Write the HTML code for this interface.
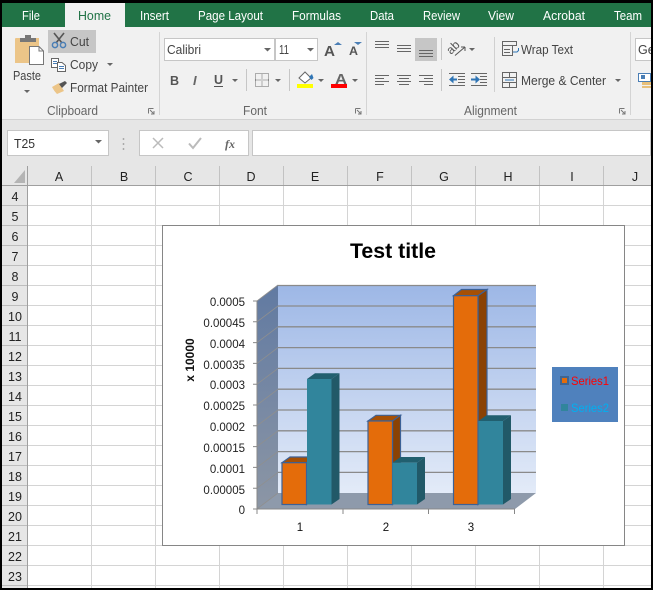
<!DOCTYPE html>
<html><head><meta charset="utf-8"><style>
html,body{margin:0;padding:0;background:#000;overflow:hidden}
svg{display:block}
path{shape-rendering:geometricPrecision}
text{font-family:"Liberation Sans",sans-serif}
.r{font-size:12.5px;fill:#444}
.t{font-size:12.5px;fill:#fff}
.l{font-size:12.5px;fill:#666}
.h{font-size:12.5px;fill:#222;text-anchor:middle}
.y{font-size:11.5px;fill:#222;text-anchor:end}
</style></head><body>
<svg xmlns="http://www.w3.org/2000/svg" width="653" height="590" viewBox="0 0 653 590" shape-rendering="crispEdges">
<defs>
<linearGradient id="wall" x1="0" y1="0" x2="0" y2="1"><stop offset="0" stop-color="#9db7e6"/><stop offset="1" stop-color="#e3ebf8"/></linearGradient>
<linearGradient id="lw" x1="0" y1="0" x2="0" y2="1"><stop offset="0" stop-color="#617aa2"/><stop offset="1" stop-color="#8c96a5"/></linearGradient>
</defs>
<rect width="653" height="590" fill="#000"/>
<!-- Window -->
<rect x="2" y="3" width="649" height="585" fill="#fff"/>
<!-- Tabs -->
<rect x="2" y="3" width="649" height="24" fill="#217346"/>
<rect x="65" y="3" width="60" height="24" fill="#f1f1f1"/>
<text class="t" x="22" y="20" textLength="18" lengthAdjust="spacingAndGlyphs">File</text>
<text x="78" y="20" font-size="12.5" fill="#217346" textLength="33" lengthAdjust="spacingAndGlyphs">Home</text>
<text class="t" x="140" y="20" textLength="29" lengthAdjust="spacingAndGlyphs">Insert</text>
<text class="t" x="198" y="20" textLength="65" lengthAdjust="spacingAndGlyphs">Page Layout</text>
<text class="t" x="292" y="20" textLength="49" lengthAdjust="spacingAndGlyphs">Formulas</text>
<text class="t" x="370" y="20" textLength="24" lengthAdjust="spacingAndGlyphs">Data</text>
<text class="t" x="423" y="20" textLength="37" lengthAdjust="spacingAndGlyphs">Review</text>
<text class="t" x="488" y="20" textLength="26" lengthAdjust="spacingAndGlyphs">View</text>
<text class="t" x="543" y="20" textLength="42" lengthAdjust="spacingAndGlyphs">Acrobat</text>
<text class="t" x="614" y="20" textLength="28" lengthAdjust="spacingAndGlyphs">Team</text>
<!-- Ribbon -->
<rect x="2" y="27" width="649" height="92" fill="#f1f1f1"/>
<rect x="2" y="119" width="649" height="1" fill="#d2d2d2"/>
<rect x="159" y="32" width="1" height="83" fill="#d4d4d4"/>
<rect x="366" y="32" width="1" height="83" fill="#d4d4d4"/>
<rect x="630" y="32" width="1" height="83" fill="#d4d4d4"/>
<!-- Paste -->
<rect x="15" y="38" width="24" height="25" rx="1" fill="#ecc588"/>
<rect x="20" y="38" width="16" height="4" fill="#777"/>
<rect x="25" y="35" width="6" height="4" fill="#777"/>
<path d="M29.5 46.5H39L43.5 51V64.5H29.5Z" fill="#fff" stroke="#777"/>
<path d="M39 46.5V51H43.5" fill="none" stroke="#777"/>
<text class="r" x="13" y="80" textLength="28" lengthAdjust="spacingAndGlyphs">Paste</text>
<path d="M24 90h6l-3 3z" fill="#666"/>
<rect x="48" y="30" width="48" height="23" fill="#c6c6c6"/>
<path d="M54 33L62 43M64 33L56 43" stroke="#555" stroke-width="1.6" fill="none"/>
<circle cx="55" cy="45" r="2.6" fill="none" stroke="#4a7eb5" stroke-width="1.5" shape-rendering="geometricPrecision"/>
<circle cx="63" cy="45" r="2.6" fill="none" stroke="#4a7eb5" stroke-width="1.5" shape-rendering="geometricPrecision"/>
<text class="r" x="70" y="46" textLength="19" lengthAdjust="spacingAndGlyphs">Cut</text>
<path d="M51.500 58.500H58.500V67.500H51.500Z" fill="#fff" stroke="#666"/>
<path d="M57.500 62.500H62L65.500 65.500V71.500H57.500Z" fill="#fff" stroke="#666"/>
<path d="M53 61.500h4M53 63.500h4M59 66.500h5M59 68.500h5" stroke="#4a7eb5"/>
<text class="r" x="70" y="69" textLength="28" lengthAdjust="spacingAndGlyphs">Copy</text>
<path d="M107 63h6l-3 3z" fill="#666"/>
<path d="M52 87L59 83L64 91L57 94Q54 91 52 87Z" fill="#ecc588"/>
<path d="M59 84L65 81L67 83L62 88Z" fill="#555"/>
<text class="r" x="70" y="92" textLength="78" lengthAdjust="spacingAndGlyphs">Format Painter</text>
<text class="l" x="47" y="115" textLength="51" lengthAdjust="spacingAndGlyphs">Clipboard</text>
<path d="M148.500 108.500h5M148.500 108.500v5M150 110l4 4M154 111v3h-3" stroke="#777" fill="none"/>
<!-- Font -->
<rect x="164.500" y="38.500" width="110" height="22" fill="#fff" stroke="#c6c6c6"/>
<rect x="275.500" y="38.500" width="42" height="22" fill="#fff" stroke="#c6c6c6"/>
<text class="r" x="167" y="54" textLength="34" lengthAdjust="spacingAndGlyphs">Calibri</text>
<path d="M264 48h7l-3.500 3.500z" fill="#666"/>
<text class="r" x="279" y="54" textLength="10" lengthAdjust="spacingAndGlyphs">11</text>
<path d="M307 48h7l-3.500 3.500z" fill="#666"/>
<text x="324" y="56" font-size="15" font-weight="bold" fill="#555" textLength="11" lengthAdjust="spacingAndGlyphs">A</text>
<path d="M334 45l4-3 4 3z" fill="#4a7eb5"/>
<text x="349" y="55" font-size="12" font-weight="bold" fill="#555" textLength="9" lengthAdjust="spacingAndGlyphs">A</text>
<path d="M354 42h8l-4 3z" fill="#4a7eb5"/>
<text x="170" y="85" font-size="12.500" font-weight="bold" fill="#555">B</text>
<text x="193" y="85" font-size="13" font-style="italic" font-weight="bold" fill="#666">I</text>
<text x="214" y="84" font-size="12.500" font-weight="bold" fill="#555">U</text>
<rect x="214" y="86" width="9" height="1" fill="#555"/>
<path d="M232 79h6l-3 3z" fill="#666"/>
<rect x="246" y="69" width="1" height="22" fill="#c6c6c6"/>
<path d="M255.500 73.500h13v13h-13zM262 73.500v13M255.500 80h13" fill="none" stroke="#666" stroke-dasharray="1 1"/>
<path d="M275 79h6l-3 3z" fill="#666"/>
<rect x="289" y="69" width="1" height="22" fill="#c6c6c6"/>
<path d="M299 78L305 72L311 78L305 83Z" fill="#fff" stroke="#666"/>
<path d="M309 77l3-3 1.500 4-2 2z" fill="#2f75b5"/>
<rect x="297" y="84" width="16" height="4" fill="#ffff00"/>
<path d="M318 79h6l-3 3z" fill="#666"/>
<text x="335" y="84" font-size="15" font-weight="bold" fill="#666" textLength="12" lengthAdjust="spacingAndGlyphs">A</text>
<rect x="331" y="84" width="16" height="4" fill="#ff0000"/>
<path d="M352 79h6l-3 3z" fill="#666"/>
<text class="l" x="243" y="115" textLength="24" lengthAdjust="spacingAndGlyphs">Font</text>
<path d="M355.500 108.500h5M355.500 108.500v5M357 110l4 4M361 111v3h-3" stroke="#777" fill="none"/>
<!-- Alignment -->
<path d="M375 41.500h14M375 44.500h14M375 47.500h14M397 45.500h14M397 48.500h14M397 51.500h14" stroke="#666"/>
<rect x="415" y="38" width="22" height="23" fill="#c6c6c6"/>
<path d="M419 50.500h14M419 53.500h14M419 56.500h14" stroke="#666"/>
<rect x="441" y="38" width="1" height="22" fill="#c6c6c6"/>
<rect x="441" y="69" width="1" height="22" fill="#c6c6c6"/>
<text x="0" y="0" font-size="12" fill="#555" transform="translate(451 55) rotate(-45)">ab</text>
<path d="M455 55.500L465 47M465 47h-4M465 47v4" stroke="#555" fill="none"/>
<path d="M469 48h6l-3 3z" fill="#666"/>
<rect x="494" y="37" width="1" height="55" fill="#d0d0d0"/>
<path d="M502.500 41.500h14v4h-14zM502.500 45.500v10h10v-10M504 49.500h6M504 52.500h6" fill="none" stroke="#666"/>
<path d="M513 52h4l1.500-1.500V48" fill="none" stroke="#2f75b5"/>
<text class="r" x="521" y="54" textLength="52" lengthAdjust="spacingAndGlyphs">Wrap Text</text>
<path d="M375 75.500h14M375 78.500h9M375 81.500h14M375 84.500h9M397 75.500h14M399 78.500h10M397 81.500h14M399 84.500h10M419 75.500h14M424 78.500h9M419 81.500h14M424 84.500h9" stroke="#666"/>
<path d="M449 73.500h16M458 76.500h7M458 79.500h7M458 82.500h7M449 85.500h16M471 73.500h16M480 76.500h7M480 79.500h7M480 82.500h7M471 85.500h16" stroke="#666"/>
<path d="M449 79.500l4.500-4v3h3.500v2h-3.500v3z" fill="#2f75b5"/>
<path d="M480 79.500l-4.500-4v3H471v2h4.500v3z" fill="#2f75b5"/>
<path d="M502.500 72.500h14v15h-14zM502.500 77.500h14M502.500 82.500h14M509.500 72.500v5M509.500 82.500v5" fill="none" stroke="#666"/>
<path d="M505 80h9" stroke="#2f75b5"/>
<text class="r" x="521" y="85" textLength="85" lengthAdjust="spacingAndGlyphs">Merge &amp; Center</text>
<path d="M615 79h6l-3 3z" fill="#666"/>
<text class="l" x="464" y="115" textLength="53" lengthAdjust="spacingAndGlyphs">Alignment</text>
<path d="M619.500 108.500h5M619.500 108.500v5M621 110l4 4M625 111v3h-3" stroke="#777" fill="none"/>
<rect x="635.500" y="38.500" width="20" height="22" fill="#fff" stroke="#c6c6c6"/>
<text class="r" x="638" y="54">Ge</text>
<path d="M638.500 73.500h12v8h-12z" fill="#fff" stroke="#4a7eb5"/>
<rect x="641" y="75" width="4" height="4" fill="#4a7eb5"/>
<rect x="642" y="82" width="9" height="3" fill="#e8c07a"/>
<rect x="642" y="86" width="9" height="2" fill="#e8c07a"/>
<!-- Formula bar -->
<rect x="2" y="120" width="649" height="46" fill="#e6e6e6"/>
<rect x="7.500" y="130.500" width="101" height="25" fill="#fff" stroke="#c6c6c6"/>
<text x="14" y="148" font-size="12.500" fill="#333" textLength="21" lengthAdjust="spacingAndGlyphs">T25</text>
<path d="M95 140h7l-3.500 3.500z" fill="#666"/>
<path d="M123.500 138v2M123.500 143v2M123.500 148v2" stroke="#aaa" stroke-width="1.500"/>
<rect x="139.500" y="130.500" width="109" height="25" fill="#fff" stroke="#c6c6c6"/>
<path d="M153 138L163 148M163 138L153 148" stroke="#bbb" stroke-width="1.500" fill="none"/>
<path d="M189 143.500L193 148L201 138" stroke="#bbb" stroke-width="2" fill="none"/>
<text x="225" y="148" font-size="12" font-style="italic" font-weight="bold" fill="#666" style="font-family:'Liberation Serif',serif">fx</text>
<rect x="252.500" y="130.500" width="398" height="25" fill="#fff" stroke="#c6c6c6"/>
<!-- Column headers -->
<rect x="2" y="166" width="649" height="19" fill="#e6e6e6"/>
<rect x="2" y="185" width="25" height="403" fill="#e6e6e6"/>
<path d="M25 170V183H14Z" fill="#b4b4b4"/>
<g fill="#c2c2c2">
<rect x="91" y="166" width="1" height="19"/><rect x="155" y="166" width="1" height="19"/><rect x="219" y="166" width="1" height="19"/><rect x="283" y="166" width="1" height="19"/><rect x="347" y="166" width="1" height="19"/><rect x="411" y="166" width="1" height="19"/><rect x="475" y="166" width="1" height="19"/><rect x="539" y="166" width="1" height="19"/><rect x="603" y="166" width="1" height="19"/>
</g>
<text class="h" x="59" y="181">A</text><text class="h" x="124" y="181">B</text><text class="h" x="188" y="181">C</text><text class="h" x="251" y="181">D</text><text class="h" x="315" y="181">E</text><text class="h" x="380" y="181">F</text><text class="h" x="444" y="181">G</text><text class="h" x="508" y="181">H</text><text class="h" x="572" y="181">I</text><text class="h" x="635" y="181">J</text>
<!-- Grid -->
<g fill="#d4d4d4">
<rect x="91" y="186" width="1" height="402"/><rect x="155" y="186" width="1" height="402"/><rect x="219" y="186" width="1" height="402"/><rect x="283" y="186" width="1" height="402"/><rect x="347" y="186" width="1" height="402"/><rect x="411" y="186" width="1" height="402"/><rect x="475" y="186" width="1" height="402"/><rect x="539" y="186" width="1" height="402"/><rect x="603" y="186" width="1" height="402"/>
<rect x="28" y="205" width="623" height="1"/><rect x="28" y="225" width="623" height="1"/><rect x="28" y="245" width="623" height="1"/><rect x="28" y="265" width="623" height="1"/><rect x="28" y="285" width="623" height="1"/><rect x="28" y="305" width="623" height="1"/><rect x="28" y="325" width="623" height="1"/><rect x="28" y="345" width="623" height="1"/><rect x="28" y="365" width="623" height="1"/><rect x="28" y="385" width="623" height="1"/><rect x="28" y="405" width="623" height="1"/><rect x="28" y="425" width="623" height="1"/><rect x="28" y="445" width="623" height="1"/><rect x="28" y="465" width="623" height="1"/><rect x="28" y="485" width="623" height="1"/><rect x="28" y="505" width="623" height="1"/><rect x="28" y="525" width="623" height="1"/><rect x="28" y="545" width="623" height="1"/><rect x="28" y="565" width="623" height="1"/><rect x="28" y="585" width="623" height="1"/>
</g>
<g fill="#bdbdbd">
<rect x="2" y="205" width="25" height="1"/><rect x="2" y="225" width="25" height="1"/><rect x="2" y="245" width="25" height="1"/><rect x="2" y="265" width="25" height="1"/><rect x="2" y="285" width="25" height="1"/><rect x="2" y="305" width="25" height="1"/><rect x="2" y="325" width="25" height="1"/><rect x="2" y="345" width="25" height="1"/><rect x="2" y="365" width="25" height="1"/><rect x="2" y="385" width="25" height="1"/><rect x="2" y="405" width="25" height="1"/><rect x="2" y="425" width="25" height="1"/><rect x="2" y="445" width="25" height="1"/><rect x="2" y="465" width="25" height="1"/><rect x="2" y="485" width="25" height="1"/><rect x="2" y="505" width="25" height="1"/><rect x="2" y="525" width="25" height="1"/><rect x="2" y="545" width="25" height="1"/><rect x="2" y="565" width="25" height="1"/><rect x="2" y="585" width="25" height="1"/>
</g>
<rect x="2" y="185" width="649" height="1" fill="#9f9f9f"/>
<rect x="27" y="166" width="1" height="422" fill="#9f9f9f"/>
<text class="h" x="15" y="201">4</text><text class="h" x="15" y="221">5</text><text class="h" x="15" y="241">6</text><text class="h" x="15" y="261">7</text><text class="h" x="15" y="281">8</text><text class="h" x="15" y="301">9</text><text class="h" x="15" y="321">10</text><text class="h" x="15" y="341">11</text><text class="h" x="15" y="361">12</text><text class="h" x="15" y="381">13</text><text class="h" x="15" y="401">14</text><text class="h" x="15" y="421">15</text><text class="h" x="15" y="441">16</text><text class="h" x="15" y="461">17</text><text class="h" x="15" y="481">18</text><text class="h" x="15" y="501">19</text><text class="h" x="15" y="521">20</text><text class="h" x="15" y="541">21</text><text class="h" x="15" y="561">22</text><text class="h" x="15" y="581">23</text>
<!-- Chart -->
<rect x="162.500" y="225.500" width="462" height="320" fill="#fff" stroke="#868686"/>
<text x="350" y="258" font-size="21" font-weight="bold" fill="#000" textLength="86" lengthAdjust="spacingAndGlyphs">Test title</text>
<g shape-rendering="geometricPrecision">
<path d="M257 301L278 285V493L257 509Z" fill="url(#lw)"/>
<rect x="278" y="285" width="258" height="208" fill="url(#wall)"/>
<path d="M257 509L278 493H536L515 509Z" fill="#8e9aab"/>
<path d="M278 285.500H536M278 306H536M278 326.800H536M278 347.600H536M278 368.400H536M278 389.200H536M278 410H536M278 430.800H536M278 451.600H536M278 472.400H536" stroke="#8a8a8a" stroke-width="1.300" fill="none"/>
<path d="M257 301L278 285M257 321.800L278 306M257 342.600L278 326.800M257 363.400L278 347.600M257 384.200L278 368.400M257 405L278 389.200M257 425.800L278 410M257 446.600L278 430.800M257 467.400L278 451.600M257 488.200L278 472.400M257 509L278 493" stroke="#8f8f8f" stroke-width="0.800" fill="none"/>
<path d="M253 301H257V509M253 321.800H257M253 342.600H257M253 363.400H257M253 384.200H257M253 405H257M253 425.800H257M253 446.600H257M253 467.400H257M253 488.200H257M253 509H515M257 509V514M343 509V514M428.500 509V514M514.500 509V514" stroke="#888" fill="none"/>
<!-- Bars: orange 1 -->
<g stroke="#3c6196" stroke-width="1.200">
<path d="M282 462.700L290 457H314.500L306.500 462.700Z" fill="#a65005"/>
<path d="M306.500 462.700L314.500 457V499L306.500 504.500Z" fill="#8a4204"/>
<rect x="282" y="462.700" width="24.500" height="41.800" fill="#e46c0a"/>
</g>
<!-- teal 1 -->
<path d="M307 379L315 373.300H339.500L331.500 379Z" fill="#215f6f"/>
<path d="M331.500 379L339.500 373.300V499L331.500 504.500Z" fill="#215968"/>
<rect x="307" y="379" width="24.500" height="125.500" fill="#31859c"/>
<!-- orange 2 -->
<g stroke="#3c6196" stroke-width="1.200">
<path d="M368 421L376 415.300H400.500L392.500 421Z" fill="#a65005"/>
<path d="M392.500 421L400.500 415.300V499L392.500 504.500Z" fill="#8a4204"/>
<rect x="368" y="421" width="24.500" height="83.500" fill="#e46c0a"/>
</g>
<!-- teal 2 -->
<path d="M392.500 462.700L400.500 457H425L417 462.700Z" fill="#215f6f"/>
<path d="M417 462.700L425 457V499L417 504.500Z" fill="#215968"/>
<rect x="392.500" y="462.700" width="24.500" height="41.800" fill="#31859c"/>
<!-- orange 3 -->
<g stroke="#3c6196" stroke-width="1.200">
<path d="M453.500 295.700L461.500 289.500H487L478 295.700Z" fill="#a65005"/>
<path d="M478 295.700L487 289.500V499L478 504.500Z" fill="#8a4204"/>
<rect x="453.500" y="295.700" width="24.500" height="208.800" fill="#e46c0a"/>
</g>
<!-- teal 3 -->
<path d="M478.500 421L486.500 415.300H511L503 421Z" fill="#215f6f"/>
<path d="M503 421L511 415.300V499L503 504.500Z" fill="#215968"/>
<rect x="478.500" y="421" width="24.500" height="83.500" fill="#31859c"/>
<!-- Axis labels -->
<text class="y" x="245" y="306">0.0005</text>
<text class="y" x="245" y="327">0.00045</text>
<text class="y" x="245" y="348">0.0004</text>
<text class="y" x="245" y="369">0.00035</text>
<text class="y" x="245" y="389">0.0003</text>
<text class="y" x="245" y="410">0.00025</text>
<text class="y" x="245" y="431">0.0002</text>
<text class="y" x="245" y="452">0.00015</text>
<text class="y" x="245" y="473">0.0001</text>
<text class="y" x="245" y="494">0.00005</text>
<text class="y" x="245" y="514">0</text>
<text x="300" y="531" font-size="11.500" fill="#111" text-anchor="middle">1</text>
<text x="386" y="531" font-size="11.500" fill="#111" text-anchor="middle">2</text>
<text x="471" y="531" font-size="11.500" fill="#111" text-anchor="middle">3</text>
<text x="0" y="0" font-size="12" font-weight="bold" fill="#111" text-anchor="middle" transform="translate(194 360) rotate(-90)">x 10000</text>
</g>
<!-- Legend -->
<rect x="552" y="367" width="66" height="55" fill="#4f81bd"/>
<rect x="561" y="377" width="7" height="7" fill="#e46c0a" stroke="#3f6592" stroke-width="2"/>
<text x="571" y="385" font-size="12" fill="#ff0000" textLength="38" lengthAdjust="spacingAndGlyphs">Series1</text>
<rect x="561" y="404" width="7" height="7" fill="#31859c"/>
<text x="571" y="412" font-size="12" fill="#00b0f0" textLength="38" lengthAdjust="spacingAndGlyphs">Series2</text>
<!-- Frame overlay -->
<rect x="0" y="0" width="653" height="3" fill="#000"/>
<rect x="0" y="0" width="2" height="590" fill="#000"/>
<rect x="651" y="0" width="2" height="590" fill="#000"/>
<rect x="0" y="588" width="653" height="2" fill="#000"/>
</svg>
</body></html>
